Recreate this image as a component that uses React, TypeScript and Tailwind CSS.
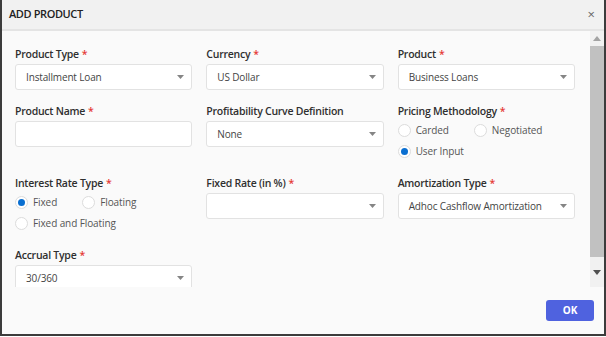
import React from 'react'

const font = { fontFamily: '"Open Sans", "Noto Sans", sans-serif' }

function Label({ text, required = true }: { text: string; required?: boolean }) {
  return (
    <div className="h-[16px] whitespace-nowrap text-[10.5px] leading-[16px] font-semibold tracking-[-0.25px] text-[#2f2f2f]">
      {text}
      {required && <span className="ml-[3px] text-[#e53935]">*</span>}
    </div>
  )
}

function Select({ value = '' }: { value?: string }) {
  return (
    <div className="flex h-[26px] items-center justify-between rounded-[3px] border border-[#e2e2e2] bg-white pl-[10px] pr-[7px] text-[10px] tracking-[-0.15px] text-[#444]">
      <span className="whitespace-nowrap">{value}</span>
      <svg width="7" height="4" viewBox="0 0 7 4">
        <path d="M0 0h7L3.5 4z" fill="#858585" />
      </svg>
    </div>
  )
}

function Radio({ label, checked = false }: { label: string; checked?: boolean }) {
  return (
    <div className="flex h-[21px] items-center gap-[5px] whitespace-nowrap text-[10px] tracking-[-0.1px] text-[#555]">
      <span className="flex h-[13px] w-[13px] items-center justify-center rounded-full border border-[#dcdcdc] bg-white">
        {checked && <span className="h-[7px] w-[7px] rounded-full bg-[#0a6fd1]" />}
      </span>
      <span>{label}</span>
    </div>
  )
}

function Field({ label, value, required = true }: { label: string; value?: string; required?: boolean }) {
  return (
    <div>
      <Label text={label} required={required} />
      <div className="mt-[2px]">
        <Select value={value} />
      </div>
    </div>
  )
}

function RadioField({ label, options, checked }: { label: string; options: string[]; checked: string }) {
  return (
    <div>
      <Label text={label} />
      <div className="mt-[1px] flex flex-wrap gap-x-[25px]">
        {options.map((o) => (
          <Radio key={o} label={o} checked={o === checked} />
        ))}
      </div>
    </div>
  )
}

export default function App() {
  return (
    <div className="flex h-[336px] w-[606px] flex-col border-x-2 border-b-2 border-[#3c3c3c] bg-[#fafafa]" style={font}>
      <div className="flex h-[31px] shrink-0 items-center justify-between border-b-2 border-[#e4e4e4] bg-[#f1f1f1] pl-[7px] pr-[9px]">
        <span className="text-[11px] font-semibold tracking-[-0.4px] text-[#222]">ADD PRODUCT</span>
        <span className="text-[13px] text-[#666]">×</span>
      </div>
      <div className="flex h-[256px] shrink-0">
        <div className="flex-1 overflow-hidden pl-[13px] pr-[15px] pt-[15px]">
          <div className="grid grid-cols-3 gap-x-[14px] gap-y-[13px]">
            <Field label="Product Type" value="Installment Loan" />
            <Field label="Currency" value="US Dollar" />
            <Field label="Product" value="Business Loans" />
            <div>
              <Label text="Product Name" />
              <div className="mt-[2px] h-[26px] rounded-[3px] border border-[#e2e2e2] bg-white" />
            </div>
            <Field label="Profitability Curve Definition" value="None" required={false} />
            <RadioField label="Pricing Methodology" options={['Carded', 'Negotiated', 'User Input']} checked="User Input" />
            <RadioField label="Interest Rate Type" options={['Fixed', 'Floating', 'Fixed and Floating']} checked="Fixed" />
            <Field label="Fixed Rate (in %)" />
            <Field label="Amortization Type" value="Adhoc Cashflow Amortization" />
            <Field label="Accrual Type" value="30/360" />
          </div>
        </div>
        <div className="flex w-[14px] flex-col items-center bg-[#f1f1f1]">
          <div className="flex h-[15px] items-center justify-center">
            <svg width="8" height="5" viewBox="0 0 8 5">
              <path d="M0 5h8L4 0z" fill="#a3a3a3" />
            </svg>
          </div>
          <div className="h-[211px] w-full bg-[#c1c1c1]" />
          <div className="flex flex-1 items-center justify-center">
            <svg width="8" height="5" viewBox="0 0 8 5">
              <path d="M0 0h8L4 5z" fill="#505050" />
            </svg>
          </div>
        </div>
      </div>
      <div className="flex flex-1 items-start justify-end pr-[10px] pt-[13px]">
        <button className="h-[21px] w-[48px] rounded-[3px] bg-[#4f62df] text-[10px] font-bold text-white">OK</button>
      </div>
    </div>
  )
}
